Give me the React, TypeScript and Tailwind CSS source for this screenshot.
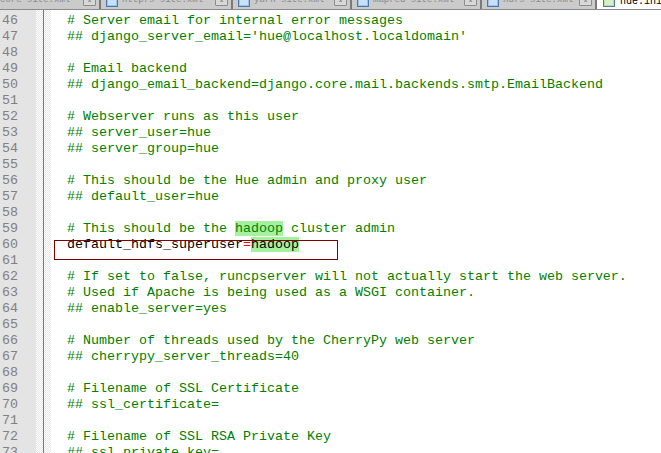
import React from "react";

type Seg = { t: string; c?: string; hl?: boolean };

const GREEN = "text-[#008000]";

const c = (t: string): Seg[] => [{ t, c: GREEN }];

const lines: { n: number; segs: Seg[] }[] = [
  { n: 46, segs: c("  # Server email for internal error messages") },
  { n: 47, segs: c("  ## django_server_email='hue@localhost.localdomain'") },
  { n: 48, segs: [] },
  { n: 49, segs: c("  # Email backend") },
  { n: 50, segs: c("  ## django_email_backend=django.core.mail.backends.smtp.EmailBackend") },
  { n: 51, segs: [] },
  { n: 52, segs: c("  # Webserver runs as this user") },
  { n: 53, segs: c("  ## server_user=hue") },
  { n: 54, segs: c("  ## server_group=hue") },
  { n: 55, segs: [] },
  { n: 56, segs: c("  # This should be the Hue admin and proxy user") },
  { n: 57, segs: c("  ## default_user=hue") },
  { n: 58, segs: [] },
  {
    n: 59,
    segs: [
      { t: "  # This should be the ", c: GREEN },
      { t: "hadoop", c: GREEN, hl: true },
      { t: " cluster admin", c: GREEN },
    ],
  },
  {
    n: 60,
    segs: [
      { t: "  default_hdfs_superuser", c: "text-black" },
      { t: "=", c: "text-[#ff0000]" },
      { t: "hadoop", c: "text-black", hl: true },
    ],
  },
  { n: 61, segs: [] },
  { n: 62, segs: c("  # If set to false, runcpserver will not actually start the web server.") },
  { n: 63, segs: c("  # Used if Apache is being used as a WSGI container.") },
  { n: 64, segs: c("  ## enable_server=yes") },
  { n: 65, segs: [] },
  { n: 66, segs: c("  # Number of threads used by the CherryPy web server") },
  { n: 67, segs: c("  ## cherrypy_server_threads=40") },
  { n: 68, segs: [] },
  { n: 69, segs: c("  # Filename of SSL Certificate") },
  { n: 70, segs: c("  ## ssl_certificate=") },
  { n: 71, segs: [] },
  { n: 72, segs: c("  # Filename of SSL RSA Private Key") },
  { n: 73, segs: c("  ## ssl_private_key=") },
];

const tabs = [
  { name: "core-site.xml", w: "w-[101px]", first: true },
  { name: "httpfs-site.xml", w: "w-[132px]" },
  { name: "yarn-site.xml", w: "w-[119px]" },
  { name: "mapred-site.xml", w: "w-[130px]" },
  { name: "hdfs-site.xml", w: "w-[115px]" },
];

function DocIcon({ active }: { active?: boolean }) {
  return (
    <svg width="12" height="12" viewBox="0 0 12 12" className="shrink-0">
      <rect x="0.5" y="0.5" width="11" height="11" fill={active ? "#b8e0a0" : "#9cc4e8"} stroke="#4a78b0" />
      <rect x="2" y="2" width="8" height="8" fill={active ? "#d8f0c8" : "#c8e0f8"} />
    </svg>
  );
}

function CloseBox() {
  return (
    <span className="flex h-[9px] w-[13px] shrink-0 items-center justify-center rounded-[1px] border border-[#8c8c8c] bg-[#d8d8d8] text-[7px] leading-none text-[#707070]">
      ×
    </span>
  );
}

function TabBar() {
  return (
    <div className="h-[10px] overflow-hidden border-b border-[#8a8a8a] bg-[#cbcbcb]">
      <div className="-mt-[10px] flex h-[22px] font-['Liberation_Mono',monospace] text-[9px]">
        {tabs.map((tab) => (
          <div
            key={tab.name}
            className={`flex h-full shrink-0 items-center gap-[4px] border-r-2 border-r-[#7a7a7a] pr-[3px] ${tab.w} ${
              tab.first ? "justify-end" : "pl-[5px]"
            }`}
          >
            {!tab.first && <DocIcon />}
            <span className="flex-1 whitespace-nowrap text-[#8a8a8a]">{tab.name}</span>
            <CloseBox />
          </div>
        ))}
        <div className="flex h-full flex-1 items-center gap-[5px] bg-white pl-[6px]">
          <DocIcon active />
          <span className="text-[10px] text-black">hue.ini</span>
        </div>
      </div>
    </div>
  );
}

export default function App() {
  return (
    <div className="relative h-[453px] w-[661px] overflow-hidden bg-white">
      <TabBar />
      <div className="flex pt-[3px] font-['Liberation_Mono','Courier_New',monospace] text-[13.33px] leading-[16px]">
        <div className="-mt-[3px] w-[36px] shrink-0 bg-[#e4e4e4] pl-[2px] pt-[3px] text-[#808080]">
          {lines.map((l) => (
            <div key={l.n} className="h-[16px]">
              {l.n}
            </div>
          ))}
        </div>
        <div className="-mt-[3px] flex w-[15px] shrink-0 bg-[repeating-conic-gradient(#e6e6e6_0%_25%,#ffffff_0%_50%)] bg-[length:2px_2px]">
          <div className="ml-[7px] w-px bg-[#7a7a7a]" />
        </div>
        <div className="flex-1 whitespace-pre">
          {lines.map((l) => (
            <div key={l.n} className="h-[16px]">
              {l.segs.map((s, i) => (
                <span key={i} className={`${s.c ?? ""} ${s.hl ? "bg-[#a4f2a0]" : ""}`}>
                  {s.t}
                </span>
              ))}
            </div>
          ))}
        </div>
      </div>
      <div className="absolute left-[54px] top-[240px] h-[20px] w-[284px] border border-[#800000]" />
    </div>
  );
}
